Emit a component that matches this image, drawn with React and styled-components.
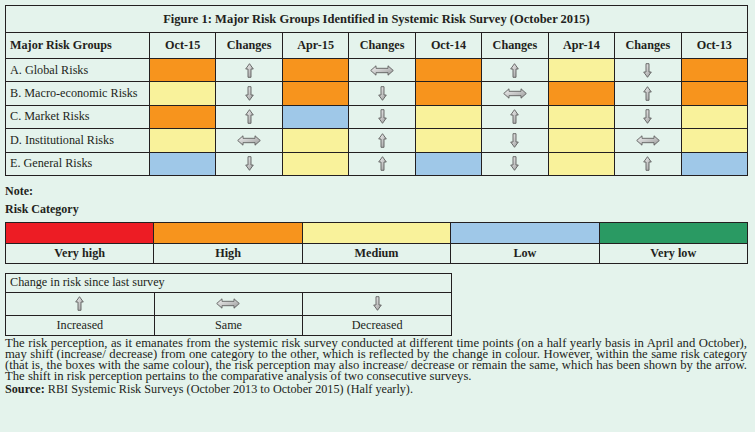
import React from "react";
import styled, { createGlobalStyle } from "styled-components";

const GlobalStyle = createGlobalStyle`
    html, body {
        margin: 0;
        padding: 0;
        background: #e4f3ec;
    }
`;

const COLORS = {
    O: "#f7941d",
    Y: "#f9f29b",
    B: "#9fc8e8",
    R: "#ed1c24",
    G: "#2a9a63",
};

const Page = styled.div`
    box-sizing: border-box;
    width: 755px;
    height: 432px;
    padding: 5px 7px 0 5px;
    background: #e4f3ec;
    font-family: "Liberation Serif", "Times New Roman", serif;
    color: #231f20;
    overflow: hidden;
`;

const Grid = styled.div`
    display: grid;
    grid-template-columns: ${(p) => p.$cols};
    grid-template-rows: ${(p) => p.$rows};
    gap: 1px;
    width: ${(p) => p.$width || "743px"};
    box-sizing: border-box;
    border: 1px solid #231f20;
    background: #231f20;
`;

const Cell = styled.div`
    display: flex;
    align-items: center;
    justify-content: ${(p) => (p.$left ? "flex-start" : "center")};
    padding: ${(p) => (p.$left ? "0 0 0 4px" : "0")};
    background: ${(p) => p.$bg || "#e4f3ec"};
    font-size: 12.2px;
    font-weight: ${(p) => (p.$bold ? 700 : 400)};
    white-space: nowrap;
`;

const TitleCell = styled(Cell)`
    grid-column: 1 / -1;
    font-size: 12.5px;
    font-weight: 700;
`;

const SpanCell = styled(Cell)`
    grid-column: 1 / -1;
`;

const NoteLine = styled.div`
    font-size: 12px;
    font-weight: 700;
    line-height: 14px;
    margin-top: ${(p) => p.$top || "0"};
`;

const Paragraph = styled.p`
    margin: 2px 0 0;
    width: 742px;
    font-size: 12.7px;
    line-height: 11px;
    text-align: justify;
`;

const Source = styled.p`
    margin: 1px 0 0;
    font-size: 12.2px;
    line-height: 12px;
    b {
        font-weight: 700;
    }
`;

const ArrowDefs = () => (
    <svg width="0" height="0" style={{ position: "absolute" }}>
        <defs>
            <linearGradient id="arrowFill" x1="0" y1="0" x2="1" y2="1">
                <stop offset="0" stopColor="#f4f4f4" />
                <stop offset="1" stopColor="#9a9a9a" />
            </linearGradient>
        </defs>
    </svg>
);

const UpArrow = () => (
    <svg width="9" height="15" viewBox="0 0 9 15">
        <polygon
            points="4.5,0.7 8.3,6 6,6 6,14.3 3,14.3 3,6 0.7,6"
            fill="url(#arrowFill)"
            stroke="#5e5e5e"
            strokeWidth="0.9"
            strokeLinejoin="round"
        />
    </svg>
);

const DownArrow = () => (
    <svg width="9" height="15" viewBox="0 0 9 15">
        <polygon
            points="4.5,14.3 8.3,9 6,9 6,0.7 3,0.7 3,9 0.7,9"
            fill="url(#arrowFill)"
            stroke="#5e5e5e"
            strokeWidth="0.9"
            strokeLinejoin="round"
        />
    </svg>
);

const SameArrow = () => (
    <svg width="24" height="11" viewBox="0 0 24 11">
        <polygon
            points="0.7,5.5 6,0.8 6,3.3 18,3.3 18,0.8 23.3,5.5 18,10.2 18,7.7 6,7.7 6,10.2"
            fill="url(#arrowFill)"
            stroke="#5e5e5e"
            strokeWidth="0.9"
            strokeLinejoin="round"
        />
    </svg>
);

const ARROWS = { u: UpArrow, d: DownArrow, s: SameArrow };

const HEADERS = ["Oct-15", "Changes", "Apr-15", "Changes", "Oct-14", "Changes", "Apr-14", "Changes", "Oct-13"];

const ROWS = [
    ["A. Global Risks", ["O", "u", "O", "s", "O", "u", "Y", "d", "O"]],
    ["B. Macro-economic Risks", ["Y", "d", "O", "d", "O", "s", "O", "u", "O"]],
    ["C. Market Risks", ["O", "u", "B", "d", "Y", "u", "Y", "d", "Y"]],
    ["D. Institutional Risks", ["Y", "s", "Y", "u", "Y", "d", "Y", "s", "Y"]],
    ["E. General Risks", ["B", "d", "Y", "u", "B", "d", "Y", "u", "B"]],
];

const CATEGORIES = [
    ["R", "Very high"],
    ["O", "High"],
    ["Y", "Medium"],
    ["B", "Low"],
    ["G", "Very low"],
];

const CHANGES = [
    ["u", "Increased"],
    ["s", "Same"],
    ["d", "Decreased"],
];

const SurveyTable = () => (
    <Grid $cols="143px repeat(9, 1fr)" $rows="26px 25px repeat(5, 22.4px)">
        <TitleCell>Figure 1: Major Risk Groups Identified in Systemic Risk Survey (October 2015)</TitleCell>
        <Cell $left $bold>Major Risk Groups</Cell>
        {HEADERS.map((h, i) => (
            <Cell key={i} $bold>{h}</Cell>
        ))}
        {ROWS.map(([label, cells]) => (
            <React.Fragment key={label}>
                <Cell $left>{label}</Cell>
                {cells.map((c, i) => {
                    const Arrow = ARROWS[c];
                    return Arrow ? (
                        <Cell key={i}><Arrow /></Cell>
                    ) : (
                        <Cell key={i} $bg={COLORS[c]} />
                    );
                })}
            </React.Fragment>
        ))}
    </Grid>
);

const CategoryLegend = () => (
    <Grid $cols="repeat(5, 1fr)" $rows="20px 19px">
        {CATEGORIES.map(([c]) => (
            <Cell key={c} $bg={COLORS[c]} />
        ))}
        {CATEGORIES.map(([c, label]) => (
            <Cell key={label} $bold>{label}</Cell>
        ))}
    </Grid>
);

const ChangeLegend = () => (
    <Grid $cols="repeat(3, 1fr)" $rows="18px 22px 19px" $width="447px">
        <SpanCell $left>Change in risk since last survey</SpanCell>
        {CHANGES.map(([c]) => {
            const Arrow = ARROWS[c];
            return <Cell key={c}><Arrow /></Cell>;
        })}
        {CHANGES.map(([c, label]) => (
            <Cell key={label}>{label}</Cell>
        ))}
    </Grid>
);

const Spacer = styled.div`
    height: ${(p) => p.$h};
`;

const App = () => (
    <Page>
        <GlobalStyle />
        <ArrowDefs />
        <SurveyTable />
        <NoteLine $top="8px">Note:</NoteLine>
        <NoteLine $top="4px">Risk Category</NoteLine>
        <Spacer $h="6px" />
        <CategoryLegend />
        <Spacer $h="9px" />
        <ChangeLegend />
        <Paragraph>
            The risk perception, as it emanates from the systemic risk survey conducted at different time points (on a half yearly basis in April and October), may shift (increase/ decrease) from one category to the other, which is reflected by the change in colour. However, within the same risk category (that is, the boxes with the same colour), the risk perception may also increase/ decrease or remain the same, which has been shown by the arrow. The shift in risk perception pertains to the comparative analysis of two consecutive surveys.
        </Paragraph>
        <Source>
            <b>Source:</b> RBI Systemic Risk Surveys (October 2013 to October 2015) (Half yearly).
        </Source>
    </Page>
);

export default App;
